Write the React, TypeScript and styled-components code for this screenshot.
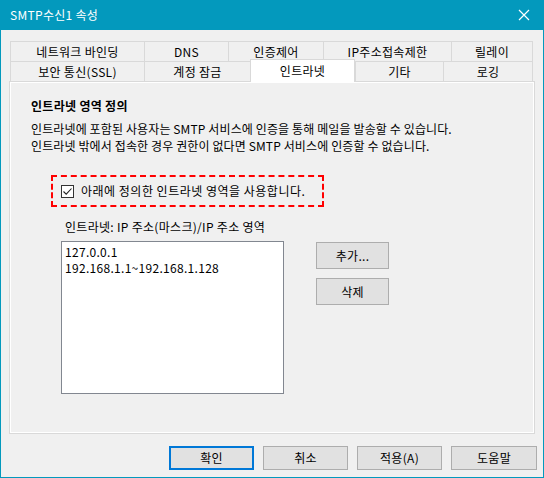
import React from "react";
import styled, { createGlobalStyle } from "styled-components";

const GlobalStyle = createGlobalStyle`
  html, body {
    margin: 0;
    padding: 0;
    background: #f0f0f0;
  }
  body {
    font-family: "Noto Sans CJK KR", "Noto Sans", sans-serif;
    font-size: 12px;
    letter-spacing: 0.3px;
    color: #000;
  }
`;

const StyledWindow = styled.div`
  width: 544px;
  height: 478px;
  box-sizing: border-box;
  background: #f0f0f0;
  border: 1px solid #0399bd;
  border-top: none;
  display: flex;
  flex-direction: column;
`;

const StyledTitleBar = styled.div`
  height: 30px;
  margin: 0 -1px;
  background: #0399bd;
  color: #fff;
  display: flex;
  align-items: center;
  justify-content: space-between;
  padding: 0 10px;
  line-height: 16px;
`;

const StyledClose = styled.div`
  width: 12px;
  height: 12px;
  margin-right: 4px;
  display: flex;
`;

const StyledTabs = styled.div`
  margin: 11px 0 0 9px;
  width: 523px;
`;

const StyledTabRow = styled.div<{ cols: string }>`
  display: grid;
  grid-template-columns: ${(p) => p.cols};
  height: 20px;
`;

const StyledTab = styled.div<{ active?: boolean; last?: boolean }>`
  box-sizing: border-box;
  height: ${(p) => (p.active ? "23px" : "20px")};
  margin-top: ${(p) => (p.active ? "-2px" : "0")};
  position: relative;
  z-index: ${(p) => (p.active ? 2 : 1)};
  background: ${(p) => (p.active ? "#fff" : "#f0f0f0")};
  border-top: 1px solid #d9d9d9;
  border-left: 1px solid #d9d9d9;
  border-right: ${(p) => (p.last || p.active ? "1px solid #d9d9d9" : "none")};
  display: flex;
  align-items: center;
  justify-content: center;
  padding-top: ${(p) => (p.active ? "0" : "1px")};
  line-height: 16px;
  white-space: nowrap;
`;

const StyledPanel = styled.div`
  margin-left: 8px;
  width: 526px;
  height: 353px;
  box-sizing: border-box;
  border: 1px solid #d9d9d9;
  box-shadow: inset 1px 1px 0 #fff, inset -1px -1px 0 #fff;
  padding: 16px 0 0 21px;
`;

const StyledHeading = styled.div`
  font-weight: bold;
  line-height: 16px;
`;

const StyledDesc = styled.div`
  margin-top: 6px;
  line-height: 17px;
  letter-spacing: 0.12px;
`;

const StyledHighlight = styled.div`
  margin: 21px 0 0 20px;
  width: 273px;
  height: 32px;
  box-sizing: border-box;
  border: 2px dashed #ff0000;
  display: flex;
  align-items: center;
  padding-left: 8px;
  gap: 7px;
`;

const StyledCheckBox = styled.div`
  width: 13px;
  height: 13px;
  box-sizing: border-box;
  border: 1px solid #333;
  background: #fff;
  display: flex;
  align-items: center;
  justify-content: center;
`;

const StyledCheckLabel = styled.span`
  line-height: 16px;
  letter-spacing: 0.5px;
`;

const StyledSection = styled.div`
  margin: 12px 0 0 30px;
`;

const StyledListLabel = styled.div`
  margin-left: 4px;
  line-height: 16px;
`;

const StyledListRow = styled.div`
  margin-top: 6px;
  display: flex;
  align-items: flex-start;
  gap: 32px;
`;

const StyledListBox = styled.div`
  width: 223px;
  height: 153px;
  box-sizing: border-box;
  border: 1px solid #828790;
  background: #fff;
  padding: 2px 3px;
`;

const StyledListItem = styled.div`
  line-height: 16px;
  white-space: nowrap;
`;

const StyledSideButtons = styled.div`
  display: flex;
  flex-direction: column;
  gap: 9px;
  padding-top: 1px;
`;

const StyledButton = styled.button<{ w: number; h: number; primary?: boolean }>`
  width: ${(p) => p.w}px;
  height: ${(p) => p.h}px;
  box-sizing: border-box;
  background: #e1e1e1;
  border: ${(p) => (p.primary ? "2px solid #0078d7" : "1px solid #adadad")};
  font-family: inherit;
  font-size: 12px;
  letter-spacing: 0.3px;
  color: #000;
  line-height: 16px;
  padding: 0;
  margin: 0;
`;

const StyledFooter = styled.div`
  display: flex;
  justify-content: flex-end;
  gap: 9px;
  margin-top: 12px;
  padding-right: 6px;
`;

const CloseIcon = () => (
  <svg width="12" height="12" viewBox="0 0 12 12">
    <path d="M1 1 L11 11 M11 1 L1 11" stroke="#fff" strokeWidth="1.2" fill="none" />
  </svg>
);

const CheckMark = () => (
  <svg width="11" height="11" viewBox="0 0 11 11">
    <path d="M1.5 5.5 L4.2 8.2 L9.5 2.5" stroke="#222" strokeWidth="1.1" fill="none" />
  </svg>
);

const row1 = ["네트워크 바인딩", "DNS", "인증제어", "IP주소접속제한", "릴레이"];
const row2 = ["보안 통신(SSL)", "계정 잠금", "인트라넷", "기타", "로깅"];

const App = () => {
  return (
    <>
      <GlobalStyle />
      <StyledWindow>
        <StyledTitleBar>
          <span>SMTP수신1 속성</span>
          <StyledClose>
            <CloseIcon />
          </StyledClose>
        </StyledTitleBar>

        <StyledTabs>
          <StyledTabRow cols="134px 84px 95px 128px 82px">
            {row1.map((t, i) => (
              <StyledTab key={t} last={i === row1.length - 1}>
                {t}
              </StyledTab>
            ))}
          </StyledTabRow>
          <StyledTabRow cols="134px 106px 105px 88px 90px">
            {row2.map((t, i) => (
              <StyledTab key={t} active={t === "인트라넷"} last={i === row2.length - 1}>
                {t}
              </StyledTab>
            ))}
          </StyledTabRow>
        </StyledTabs>

        <StyledPanel>
          <StyledHeading>인트라넷 영역 정의</StyledHeading>
          <StyledDesc>
            인트라넷에 포함된 사용자는 SMTP 서비스에 인증을 통해 메일을 발송할 수 있습니다.
            <br />
            인트라넷 밖에서 접속한 경우 권한이 없다면 SMTP 서비스에 인증할 수 없습니다.
          </StyledDesc>

          <StyledHighlight>
            <StyledCheckBox>
              <CheckMark />
            </StyledCheckBox>
            <StyledCheckLabel>아래에 정의한 인트라넷 영역을 사용합니다.</StyledCheckLabel>
          </StyledHighlight>

          <StyledSection>
            <StyledListLabel>인트라넷: IP 주소(마스크)/IP 주소 영역</StyledListLabel>
            <StyledListRow>
              <StyledListBox>
                <StyledListItem>127.0.0.1</StyledListItem>
                <StyledListItem>192.168.1.1~192.168.1.128</StyledListItem>
              </StyledListBox>
              <StyledSideButtons>
                <StyledButton w={73} h={27}>추가...</StyledButton>
                <StyledButton w={73} h={27}>삭제</StyledButton>
              </StyledSideButtons>
            </StyledListRow>
          </StyledSection>
        </StyledPanel>

        <StyledFooter>
          <StyledButton w={85} h={24} primary>확인</StyledButton>
          <StyledButton w={85} h={24}>취소</StyledButton>
          <StyledButton w={85} h={24}>적용(A)</StyledButton>
          <StyledButton w={86} h={24}>도움말</StyledButton>
        </StyledFooter>
      </StyledWindow>
    </>
  );
};

export default App;
